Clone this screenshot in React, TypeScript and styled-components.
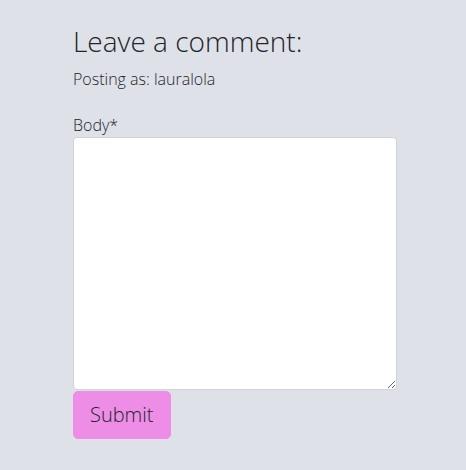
import React from 'react';
import styled, { createGlobalStyle } from 'styled-components';

const GlobalStyle = createGlobalStyle`
  html, body {
    margin: 0;
    background: #dfe1e8;
  }
  body {
    font-family: 'Open Sans', 'Liberation Sans', sans-serif;
    font-weight: 300;
    color: #212529;
  }
`;

const Page = styled.div`
  min-height: 470px;
  padding: 25px 0 0 73px;
  box-sizing: border-box;
`;

const CommentForm = styled.form`
  width: 324px;
  display: flex;
  flex-direction: column;
  align-items: flex-start;
`;

const Title = styled.h3`
  margin: 0 0 8px;
  font-size: 28px;
  font-weight: 300;
  line-height: 1.2;
`;

const PostingAs = styled.p`
  margin: 0 0 22px;
  font-size: 16px;
  line-height: 1.5;
`;

const Label = styled.label`
  font-size: 16px;
  line-height: 1.5;
`;

const BodyInput = styled.textarea`
  box-sizing: border-box;
  width: 324px;
  height: 253px;
  margin: 0;
  padding: 6px 12px;
  border: 1px solid #ced4da;
  border-radius: 4px;
  background: #ffffff;
  font-family: inherit;
  font-size: 16px;
  font-weight: 300;
  color: #212529;
  resize: vertical;
`;

const SubmitButton = styled.button`
  margin-top: 1px;
  box-sizing: border-box;
  height: 48px;
  padding: 0 16px;
  border: 1px solid #ed8de6;
  border-radius: 5px;
  background: #ed8de6;
  color: #212529;
  font-family: inherit;
  font-size: 20px;
  font-weight: 300;
  line-height: 1.5;
  cursor: pointer;
`;

export default function App() {
  return (
    <>
      <GlobalStyle />
      <Page>
        <CommentForm onSubmit={(e) => e.preventDefault()}>
          <Title>Leave a comment:</Title>
          <PostingAs>Posting as: lauralola</PostingAs>
          <Label htmlFor="body">Body*</Label>
          <BodyInput id="body" name="body" />
          <SubmitButton type="submit">Submit</SubmitButton>
        </CommentForm>
      </Page>
    </>
  );
}
